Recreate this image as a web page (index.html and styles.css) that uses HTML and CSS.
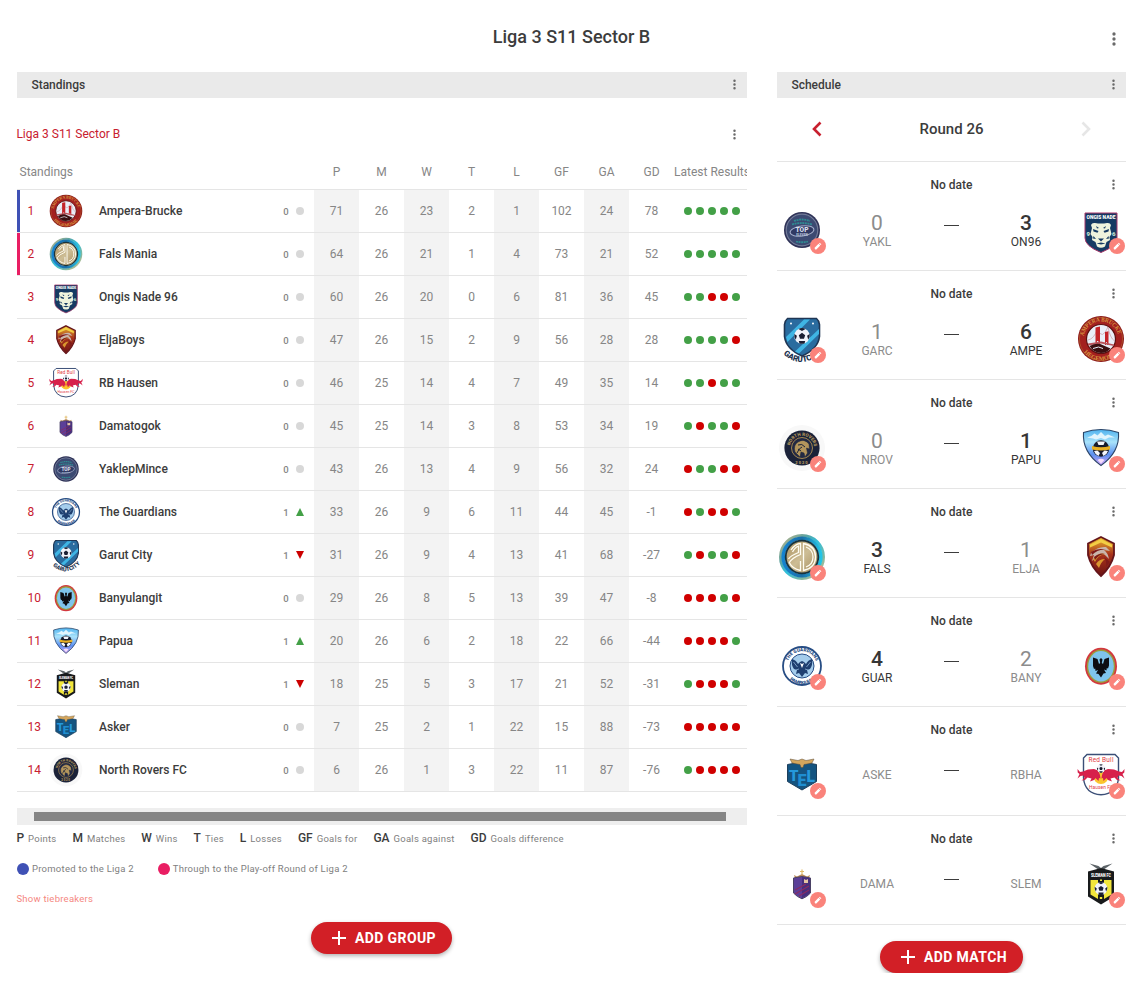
FILE: index.html
```html
<!DOCTYPE html>
<html lang="en">

<head>
    <meta charset="UTF-8">
    <meta name="viewport" content="width=device-width, initial-scale=1.0">
    <title>Liga 3 S11 Sector B</title>
    <link rel="stylesheet" href="styles.css">
</head>

<body>
    <!-- Gradients and text arcs used by the crests -->
    <svg class="defs" width="0" height="0">
        <defs>
            <linearGradient id="falsOuter" x1="0" y1="0" x2="1" y2="1">
                <stop offset="0" stop-color="#c9b98a" />
                <stop offset=".3" stop-color="#5fa3a0" />
                <stop offset=".5" stop-color="#2fc0dd" />
                <stop offset=".75" stop-color="#7fb7a0" />
                <stop offset="1" stop-color="#d8c391" />
            </linearGradient>
            <linearGradient id="falsInner" x1="0" y1="0" x2="1" y2="0">
                <stop offset="0" stop-color="#1583cf" />
                <stop offset=".5" stop-color="#1b6fa8" />
                <stop offset="1" stop-color="#22c4e6" />
            </linearGradient>
            <linearGradient id="goldFill" x1="0" y1="0" x2="1" y2="1">
                <stop offset="0" stop-color="#a98f5c" />
                <stop offset=".5" stop-color="#cdbd95" />
                <stop offset="1" stop-color="#a48b5a" />
            </linearGradient>
            <linearGradient id="eljaFill" x1="0" y1="0" x2="0" y2="1">
                <stop offset="0" stop-color="#e9b92f" />
                <stop offset=".45" stop-color="#a8321b" />
                <stop offset="1" stop-color="#6d1414" />
            </linearGradient>
            <linearGradient id="papuaFill" x1="0" y1="0" x2="0" y2="1">
                <stop offset="0" stop-color="#4fb2ee" />
                <stop offset=".35" stop-color="#a9e3fb" />
                <stop offset=".7" stop-color="#5b8ff0" />
                <stop offset="1" stop-color="#d9a5f5" />
            </linearGradient>
            <path id="arcTop" d="M6.500 24a17.500 17.500 0 0 1 35 0" />
            <path id="arcBottom" d="M2.500 24a21.500 21.500 0 0 0 43 0" />
            <path id="arcTopIn" d="M9.300 24a14.700 14.700 0 0 1 29.400 0" />
            <path id="arcBottomIn" d="M5.800 24a18.200 18.200 0 0 0 36.400 0" />
            <path id="arcGarut" d="M4.500 38.500Q24 56 43 37.500" />
            <path id="arcRovers" d="M11.800 24a12.200 12.200 0 0 1 24.400 0" />
        </defs>
    </svg>

    <!-- Icons and club crests -->
    <svg class="sprite">
        <symbol id="more" viewBox="0 0 24 24">
            <path d="M12 8a2 2 0 1 0 0-4 2 2 0 0 0 0 4zm0 2a2 2 0 1 0 0 4 2 2 0 0 0 0-4zm0 6a2 2 0 1 0 0 4 2 2 0 0 0 0-4z" />
        </symbol>
        <symbol id="pen" viewBox="0 0 24 24">
            <path d="M3 16.500V21h4.500L18 10.500 13.500 6zM21 7.500L16.500 3l-2 2L19 9.500z" />
        </symbol>
        <symbol id="ball" viewBox="0 0 24 24">
            <circle cx="12" cy="12" r="11" fill="#f1f3fa" />
            <path d="M12 7.500l4.500 3.300-1.700 5.200H9.200l-1.700-5.200zM7 2.200Q12-.5 17 2.200l-5 2.600zM22.800 9l-3.600 2.800 1.600 5.500q2.800-4 2-8.300zM1.200 9l3.600 2.800-1.600 5.500Q.4 13.300 1.200 9zM7.500 19h9l-.9 3.500q-3.600 1-7.200 0z" fill="#1b1f33" />
        </symbol>

        <symbol id="ampe" viewBox="0 0 48 48">
            <circle cx="24" cy="24" r="23" fill="#8c1717" />
            <circle cx="24" cy="24" r="21.600" fill="#a3201f" stroke="#c9963f" stroke-width=".4" />
            <circle cx="24" cy="24" r="14.500" fill="#e9eff8" stroke="#5e1010" stroke-width="1.200" />
            <path d="M11 25Q17 24 20.500 14 25 26 31 12 33 23 37.500 26" fill="none" stroke="#c98c94" stroke-width=".6" />
            <path d="M18.500 12.500l4.500-1V29h-1.600v-3h-1.500v4h-1.400zM28 17l3.500-.8V30H30v-3h-1v3h-1z" fill="#c42429" />
            <path d="M11 28.500l13-2 13 3v1.500l-13-2.500-13 2z" fill="#b8545a" />
            <path d="M12.500 31q8-4 13-1l8 3.500q-4 4.500-9.500 4.500-7.500 0-11.500-7z" fill="#3a0f10" />
            <path d="M16 33.500q6-3 10 0" fill="none" stroke="#e9eff8" stroke-width="1" />
            <g fill="#d9993f" font-family="Liberation Serif, serif" font-weight="700" font-size="6">
                <text textLength="47" lengthAdjust="spacingAndGlyphs"><textPath href="#arcTop" startOffset="3">AMPERA BRUCKE</textPath></text>
                <text><textPath href="#arcBottom" startOffset="14">HEGEMONIE</textPath></text>
            </g>
        </symbol>

        <symbol id="fals" viewBox="0 0 48 48">
            <circle cx="24" cy="24" r="21.500" fill="none" stroke="url(#falsOuter)" stroke-width="3" />
            <circle cx="24" cy="24" r="18.800" fill="none" stroke="url(#falsInner)" stroke-width="3.600" />
            <circle cx="24" cy="24" r="16.300" fill="url(#goldFill)" stroke="#17333f" stroke-width="1.800" />
            <g fill="none" stroke="#fffdf3" stroke-width="1.300">
                <path d="M13 17q4-6 9.500-6.500v11Q14 25 11.300 29.500q2.700 6 11.200 8V28" />
                <path d="M14.500 19q3-5 6-5.800v6.300Q12 23 10.500 26" />
                <path d="M25.500 10.500q12 2.500 12 13.500t-12 13.500z" />
                <path d="M28 14q7 2.500 7 10t-7 10" />
            </g>
        </symbol>

        <symbol id="on96" viewBox="0 0 48 48">
            <path d="M8 7h32v25q0 8-16 14.500Q8 40 8 32z" fill="#153a63" stroke="#a6386a" stroke-width="1" />
            <text x="24" y="13.200" font-size="5.400" text-anchor="middle" textLength="29" lengthAdjust="spacingAndGlyphs" class="crest-text" fill="#fff">ONGIS NADE</text>
            <path d="M14 19q1-2.500 4-2l3 .5h6l3-.5q3-.5 4 2l-1 3 1.500 6-2 3 .5 3-3.500 2-1.500 4.500q-4 2.500-8 0L18.500 36 15 34l.5-3-2-3 1.500-6z" fill="#eef3dd" />
            <path d="M16 23l5.500 2-1 1.800-4-1.300zM32 23l-5.500 2 1 1.800 4-1.300zM21 32.500h6L24 35.500zM19.500 37.500l4.500-1 4.500 1-4.500 1zM16.500 30l2.500 3-3-.5zM31.500 30L29 33l3-.5zM19 20l3 2-2 .5zM29 20l-3 2 2 .5z" fill="#153a63" />
            <text x="9.500" y="30" font-size="6" class="crest-text" fill="#c5e4d4">9</text>
            <text x="35" y="30" font-size="6" class="crest-text" fill="#c5e4d4">6</text>
        </symbol>

        <symbol id="elja" viewBox="0 0 48 48">
            <path d="M24 4l13 6.500V22Q34 34 24 43 14 34 11 22V10.500z" fill="url(#eljaFill)" stroke="#64141a" stroke-width="1.800" />
            <path d="M24 6l11 5.500v3L24 9.500l-11 5v-3z" fill="#f3cf45" />
            <path d="M14 20q7-7 15-6l4 4-6-1q4 3 5 9l-4-4q-3-2-6 0l-7 6 2-6-4 1z" fill="#c9b5ab" />
            <path d="M16 26q6-7 12-5-7 1-10 8zM19 31q3-5 9-5-4 3-6 9z" fill="#d9962f" />
            <path d="M14 19q8-5 15-2-8-1-14 5zM27 24l6 5-4 5q1-5-2-10zM17 24q6-5 11-3-6 0-10 6z" fill="#7f1b1a" />
        </symbol>

        <symbol id="rbha" viewBox="0 0 48 48">
            <path d="M10 3.500h28l3.500 3.500v20Q40 43 24 43.800 8 43 6.500 27V7z" fill="#fff" stroke="#3b4f77" stroke-width="1.400" />
            <circle cx="24" cy="25.500" r="7.600" fill="#fbc52d" />
            <path d="M23 24l-2-4.500-4-1.500-6 .5-5 2-3 .5-2.500-3 .2 3.500 1.800 1.500L.5 27.500l3-2.500 3-.5 1 2.500-3 2.500 3.500-.5 2.500-2.500 4 1-1.500 3 4-1.500 1.500-2 3 3 .5-3 1.500.5z" fill="#d7204b" />
            <path d="M25 24l2-4.500 4-1.500 6 .5 5 2 3 .5 2.500-3-.2 3.500-1.800 1.500 2 4.500-3-2.500-3-.5-1 2.500 3 2.500-3.500-.5-2.500-2.500-4 1 1.500 3-4-1.500-1.500-2-3 3-.5-3-1.500.5z" fill="#d7204b" />
            <use href="#ball" x="19.500" y="13" width="9" height="9" />
            <text x="24" y="10.800" font-size="6.500" text-anchor="middle" textLength="25" class="crest-plain" fill="#df3a43">Red Bull</text>
            <text x="24" y="38" font-size="4.800" text-anchor="middle" textLength="24" class="crest-plain" fill="#df3a43">Hausen FC</text>
        </symbol>

        <symbol id="dama" viewBox="0 0 48 48">
            <path d="M17 18l-1-3 3 1.500L24 14l5 2.500 3-1.500-1 3z" fill="#b98958" />
            <path d="M24 9.500v5M22 11.500h4" stroke="#e2bb68" stroke-width="1.200" />
            <path d="M15.500 18l8.500-1.500 8.500 1.500v15Q29 37 24 38.800 19 37 15.500 33z" fill="#5b3f98" stroke="#4a4165" stroke-width="1" />
            <path d="M24 17l8 1.300v14.500Q29 36 24 38z" fill="#472f7c" />
            <path d="M17 30l11-6M17 34l14-8M21 36l10-6" stroke="#8a2b62" stroke-width="1.100" />
            <path d="M26 19l2 1 2-1v4h-4z" fill="#e4c5a4" />
        </symbol>

        <symbol id="yakl" viewBox="0 0 48 48">
            <circle cx="24" cy="24" r="18" fill="#2e3257" />
            <circle cx="24" cy="24" r="15.800" fill="#3c4a72" stroke="#727b98" stroke-width="1.200" />
            <path d="M16 15q8-3 16 0M14 18.500q10-3 20 0M18 35.500q6 1.500 12 0" stroke="#2f8a92" stroke-width="1.800" fill="none" stroke-dasharray="2 .6" />
            <ellipse cx="24" cy="25" rx="12" ry="5" fill="#303a63" stroke="#a4aecb" stroke-width="1" transform="rotate(-8 24 25)" />
            <text x="24" y="26.300" font-size="6.500" text-anchor="middle" textLength="13" lengthAdjust="spacingAndGlyphs" class="crest-text" fill="#d8dfec">TOP</text>
            <text x="24" y="29.700" font-size="3.200" text-anchor="middle" class="crest-text" fill="#b4c0d8">ELEVEN</text>
        </symbol>

        <symbol id="guar" viewBox="0 0 48 48">
            <circle cx="24" cy="24" r="19" fill="#fff" stroke="#274d84" stroke-width="1.800" />
            <circle cx="24" cy="24" r="12" fill="#a5cdec" stroke="#274d84" stroke-width="1" />
            <path d="M14 17q4 1 6 5l2-2 2-1 2 1 2 2q2-4 6-5 1 6-2 10l-3 1 1 4-3-1-3 4-3-4-3 1 1-4-3-1q-3-4-2-10z" fill="#1f3f70" />
            <path d="M22 21l2 1 2-1-2 5z" fill="#fff" />
            <path d="M15.500 20l4 5M32.500 20l-4 5M18 28l3-1M30 28l-3-1" stroke="#8fb4d8" stroke-width=".8" />
            <g class="crest-text" fill="#274d84" font-size="4.600">
                <text><textPath href="#arcTopIn" startOffset="5">THE GUARDIANS</textPath></text>
                <text><textPath href="#arcBottomIn" startOffset="15">PAMEKASAN</textPath></text>
            </g>
        </symbol>

        <symbol id="garc" viewBox="0 0 48 48">
            <path d="M9.500 3.500h29q2.500 2 3 6v12Q40 34 24 41 8 34 6.500 21.500v-12q.5-4 3-6z" fill="#2a6c9f" stroke="#1f3654" stroke-width="1.600" />
            <path d="M8 22L26 4.500h6L9.500 27zM17 36.500L41 14v5L21 38.500z" fill="#3fb5e4" />
            <use href="#ball" x="15.500" y="12.500" width="17" height="17" />
            <circle cx="13" cy="8.500" r="1" fill="#fff" />
            <circle cx="35" cy="8.500" r="1" fill="#fff" />
            <text font-size="8" class="crest-text" fill="#1d3450"><textPath href="#arcGarut" startOffset="1">GARUTCITY</textPath></text>
        </symbol>

        <symbol id="bany" viewBox="0 0 48 48">
            <ellipse cx="24" cy="24.200" rx="16" ry="18.500" fill="#d3383e" />
            <ellipse cx="24" cy="24.200" rx="14.200" ry="16.700" fill="#9a9b3c" />
            <ellipse cx="24" cy="24.200" rx="12.800" ry="15.200" fill="#7fc4ec" />
            <path d="M16 15.500l4.500 1.500 1.500 5 1.200-1-.7-3.500L24 16l1.500 1.500-.7 3.500 1.200 1 1.500-5 4.500-1.500 0 8-1 3-1.200-.5-.3 2.500-2.500-1 2 3.500-2.500.5L24 35.500 21.500 32l-2.500-.5 2-3.500-2.500 1-.3-2.500-1.200.5-1-3z" fill="#0d0d12" />
        </symbol>

        <symbol id="papu" viewBox="0 0 48 48">
            <path d="M6.500 8.500Q24 2.500 41.500 8.500 43 28 24 41.500 5 28 6.500 8.500z" fill="url(#papuaFill)" stroke="#2b4568" stroke-width="1.100" />
            <path d="M10 13.500q5-1 7.500-4l3 2L24 8l4 4 3-1.500 7 3-6 0-4 2-4-1.500-5 1.500-3-1z" fill="#e2f5fd" />
            <circle cx="24" cy="24.500" r="8.200" fill="#171b2c" />
            <path d="M20 17.500h8l-1.500 3.500h-5zM17 27l3.500-.5 2.500 2.500-1.500 3q-3.500-1.500-4.500-5zM31 27l-3.500-.5-2.500 2.500 1.500 3q3.500-1.500 4.500-5z" fill="#f4f6fc" />
            <path d="M15 22q9 2.500 18 0v3.500q-9 2-18 0z" fill="#e8b024" />
            <path d="M20.500 36q3.500-2.500 7 0L24 39.500z" fill="#f4dcfb" />
        </symbol>

        <symbol id="slem" viewBox="0 0 48 48">
            <path d="M12.500 3.500l9 2.500 5 4-6-1zM35.500 3.500l-9 2.500-5 4 6-1z" fill="#5d6468" />
            <path d="M24 8l13 3.500v25L24 44.500l-13-8v-25z" fill="#181a1c" />
            <path d="M13.500 20h21v14.500l-7.500 4.500h-6l-7.500-4.500z" fill="#f2e63b" />
            <path d="M21 20h6v19h-6z" fill="#181a1c" />
            <use href="#ball" x="17" y="21.500" width="14" height="14" />
            <path d="M22.800 37h2.400v2h-2.400zM23 19.500h2v1.500h-2z" fill="#f2e63b" />
            <text x="24" y="17" font-size="5.600" text-anchor="middle" textLength="20" lengthAdjust="spacingAndGlyphs" class="crest-text" fill="#fff">SLEMAN FC</text>
        </symbol>

        <symbol id="aske" viewBox="0 0 48 48">
            <path d="M9.500 13.500L24 11l14.500 2.500v17L24 39 9.500 30.500z" fill="#145480" stroke="#1d3f5c" stroke-width="1" />
            <text x="11" y="29.500" font-size="15" textLength="9.500" lengthAdjust="spacingAndGlyphs" class="crest-text" fill="#2599dc">T</text>
            <text x="19.500" y="34.500" font-size="16" textLength="9" lengthAdjust="spacingAndGlyphs" class="crest-text" fill="#1f8ed0">E</text>
            <text x="28.500" y="31" font-size="16" textLength="8.500" lengthAdjust="spacingAndGlyphs" class="crest-text" fill="#2599dc">L</text>
            <path d="M12 8l8 1.500 4-1.500 4 1.500L36 8l-2 4-5 1-3 .5-1 3h-2l-1-3-3-.5-5-1z" fill="#d4a65d" stroke="#5a4a36" stroke-width=".5" />
        </symbol>

        <symbol id="nrov" viewBox="0 0 48 48">
            <circle cx="24" cy="24" r="23" fill="#f8f8f8" />
            <circle cx="24" cy="24" r="17.600" fill="#1b2238" />
            <circle cx="24" cy="24" r="10.500" fill="#222944" stroke="#a1844f" stroke-width="1" />
            <path d="M17 28q-2-7 3-10 6-4 11 2l.5 5-3-1 1 5-2.500 4-1-4-3-1-1 5z" fill="#b3955c" stroke="#1b2238" stroke-width=".5" />
            <path d="M20 21q4-2 7 2M20 25l3 2M19 29q2-5 5-6" stroke="#1b2238" stroke-width="1" fill="none" />
            <g class="crest-text" fill="#b0925a" font-size="4.600">
                <text><textPath href="#arcRovers" startOffset="2.500">NORTH ROVERS</textPath></text>
                <text x="24" y="39.500" text-anchor="middle" font-size="4" letter-spacing="1">2020</text>
            </g>
        </symbol>
    </svg>

    <header class="page-header">
        <h1>Liga 3 S11 Sector B</h1>
        <svg class="more more-lg"><use href="#more" /></svg>
    </header>

    <main class="columns">
        <section class="standings">
            <div class="bar">
                <h2>Standings</h2>
                <svg class="more"><use href="#more" /></svg>
            </div>
            <div class="group-head">
                <a class="group-name">Liga 3 S11 Sector B</a>
                <svg class="more"><use href="#more" /></svg>
            </div>

            <div class="table-wrap">
                <div class="row head">
                    <span class="head-title">Standings</span>
                    <span>P</span>
                    <span>M</span>
                    <span>W</span>
                    <span>T</span>
                    <span>L</span>
                    <span>GF</span>
                    <span>GA</span>
                    <span>GD</span>
                    <span class="head-latest">Latest Results</span>
                </div>
                <div id="table"></div>
            </div>
            <div class="scrollbar">
                <div class="thumb"></div>
            </div>

            <div class="legend">
                <span><b>P</b>Points</span>
                <span><b>M</b>Matches</span>
                <span><b>W</b>Wins</span>
                <span><b>T</b>Ties</span>
                <span><b>L</b>Losses</span>
                <span><b>GF</b>Goals for</span>
                <span><b>GA</b>Goals against</span>
                <span><b>GD</b>Goals difference</span>
            </div>
            <div class="zones">
                <span><i class="zone promoted"></i>Promoted to the Liga 2</span>
                <span><i class="zone playoff"></i>Through to the Play-off Round of Liga 2</span>
            </div>
            <a class="tiebreakers">Show tiebreakers</a>

            <button class="add add-group">
                <svg viewBox="0 0 14 14"><path d="M7 0v14M0 7h14" /></svg>ADD GROUP
            </button>
        </section>

        <section class="schedule">
            <div class="bar">
                <h2>Schedule</h2>
                <svg class="more"><use href="#more" /></svg>
            </div>
            <div class="round">
                <svg class="arrow" viewBox="0 0 10 16"><path d="M8.500 1.500L2 8l6.500 6.500" /></svg>
                <h3>Round 26</h3>
                <svg class="arrow off" viewBox="0 0 10 16"><path d="M1.500 1.500L8 8l-6.500 6.500" /></svg>
            </div>
            <div id="matches"></div>
            <button class="add add-match">
                <svg viewBox="0 0 14 14"><path d="M7 0v14M0 7h14" /></svg>ADD MATCH
            </button>
        </section>
    </main>

    <script src="script.js"></script>
</body>

</html>
```
FILE: styles.css
```css
* {
    box-sizing: border-box;
}

body {
    margin: 0;
    padding: 0 22px 0 17px;
    background: #fff;
    color: #3c3c3c;
    font-family: Roboto, sans-serif;
    font-size: 12px;
}

h1,
h2,
h3 {
    margin: 0;
    font-weight: 500;
}

.defs {
    position: absolute;
}

.sprite {
    display: none;
}

.crest-text {
    font-family: Roboto, sans-serif;
    font-weight: 900;
}

.crest-plain {
    font-family: Roboto, sans-serif;
}

/* Header */
.page-header {
    display: grid;
    grid-template-columns: 24px 1fr 24px;
    align-items: center;
    height: 72px;
    padding-top: 2px;
}

.page-header h1 {
    grid-column: 2;
    text-align: center;
    font-size: 18px;
    line-height: 24px;
}

.more {
    width: 15px;
    height: 15px;
    fill: #6a6a6a;
}

.more-lg {
    width: 20px;
    height: 20px;
    margin: 4px 0 0 2px;
}

.columns {
    display: grid;
    grid-template-columns: 730px 349px;
    column-gap: 30px;
}

.bar {
    display: flex;
    align-items: center;
    justify-content: space-between;
    height: 26px;
    padding: 0 5px 1px 14.4px;
    background: #eaeaea;
}

.bar h2 {
    font-size: 12px;
    padding-top: 1px;
}

/* Standings */
.group-head {
    display: flex;
    align-items: center;
    justify-content: space-between;
    height: 72px;
    padding-right: 5px;
}

.group-name {
    margin-left: -.6px;
    color: #c8202f;
}

.table-wrap {
    overflow: hidden;
    margin-top: -16px;
}

.row {
    display: grid;
    grid-template-columns: 3px 30px 32px 17px 180px 14px 21px repeat(8, 45px) 78px;
    align-items: center;
    height: 43px;
    border-bottom: 1px solid #e5e5e5;
    color: #868686;
    width: 736px;
    text-align: center;
}

.row.head {
    height: 36px;
}

.head-title {
    grid-column: 1 / 8;
    text-align: left;
    padding-left: 2.5px;
}

.head-latest {
    white-space: nowrap;
    text-align: left;
}

.mark {
    align-self: stretch;
}

.promoted {
    background: #3f51b5;
}

.playoff {
    background: #e91e63;
}

.rank {
    color: #c8202f;
    text-align: left;
    padding-left: 7.5px;
}

.row .crest {
    width: 34px;
    height: 34px;
    margin-left: -1px;
}

.name {
    grid-column: 5;
    text-align: left;
    font-weight: 500;
    color: #3c3c3c;
}

.moved {
    font-size: 9.5px;
    font-weight: 500;
    padding-top: 1px;
}

.move {
    width: 8px;
    height: 8px;
    margin-left: 3px;
    background: #d8d8d8;
    border-radius: 50%;
}

.move.up,
.move.down {
    border-radius: 0;
    background: #43a047;
    clip-path: polygon(50% 0, 100% 100%, 0 100%);
}

.move.down {
    background: #c00;
    clip-path: polygon(0 0, 100% 0, 50% 100%);
}

.stat {
    height: 42px;
    line-height: 42px;
}

.shade {
    background: #f3f3f3;
}

.form {
    display: flex;
    gap: 4px;
    padding-left: 10px;
}

.form i {
    width: 8px;
    height: 8px;
    border-radius: 50%;
    background: #43a047;
}

.form .lost {
    background: #d00000;
}

.scrollbar {
    height: 17px;
    margin-top: 16px;
    padding: 4px 21px 4px 17px;
    background: #eee;
}

.thumb {
    height: 9px;
    background: #858585;
}

/* Legend */
.legend,
.zones {
    display: flex;
    font-size: 9.5px;
    letter-spacing: .25px;
    color: #808080;
    white-space: nowrap;
}

.legend {
    gap: 15.9px;
    height: 25px;
    margin-left: -.6px;
    align-items: center;
}

.legend b {
    margin-right: 4px;
    font-size: 12px;
    font-weight: 500;
    letter-spacing: 0;
    color: #3c3c3c;
}

.zones {
    gap: 24px;
    height: 37px;
    align-items: center;
}

.zones span {
    display: flex;
    align-items: center;
    gap: 3px;
}

.zone {
    width: 12px;
    height: 12px;
    border-radius: 50%;
}

.tiebreakers {
    display: block;
    height: 35px;
    margin-left: -.6px;
    line-height: 23px;
    font-size: 9.5px;
    letter-spacing: .25px;
    color: #f5877f;
}

.add {
    display: flex;
    align-items: center;
    justify-content: center;
    gap: 9px;
    height: 32px;
    margin: 0 auto;
    padding: 0 0 0 5px;
    border: 0;
    border-radius: 16px;
    background: #d21f26;
    box-shadow: 0 2px 4px rgba(0, 0, 0, .3);
    color: #fff;
    font: 700 14px/30px Roboto, sans-serif;
    letter-spacing: .4px;
}

.add svg {
    width: 14px;
    height: 14px;
    stroke: #fff;
    stroke-width: 2;
}

.add-group {
    width: 141px;
    margin-left: 294px;
}

.add-match {
    width: 143px;
    margin-top: 16px;
}

/* Schedule */
.round {
    display: flex;
    align-items: center;
    justify-content: space-between;
    height: 64px;
    padding: 0 35px 2px;
    border-bottom: 1px solid #e5e5e5;
}

.round h3 {
    font-size: 15px;
}

.arrow {
    width: 10px;
    height: 16px;
    fill: none;
    stroke: #c8202f;
    stroke-width: 2.6;
}

.arrow.off {
    stroke: #e6e6e6;
}

.match {
    height: 109px;
    border-bottom: 1px solid #e5e5e5;
}

.match-date {
    display: grid;
    grid-template-columns: 20px 1fr 20px;
    align-items: center;
    height: 44px;
    padding-top: 1px;
    text-align: center;
    font-weight: 500;
}

.match-date span {
    grid-column: 2;
    padding-top: 1px;
}

.match-row {
    display: grid;
    grid-template-columns: 50px 100px 49px 100px 50px;
    align-items: center;
    height: 48px;
    text-align: center;
}

.badge {
    position: relative;
    height: 48px;
}

.badge .crest {
    width: 48px;
    height: 48px;
}

.edit {
    position: absolute;
    right: 1px;
    bottom: 0;
    width: 16px;
    height: 16px;
    padding: 3.5px;
    border-radius: 50%;
    background: #fa837b;
    fill: #fff;
}

.side {
    color: #8c8c8c;
    line-height: 14px;
}

.side strong {
    display: block;
    font-size: 21px;
    font-weight: 400;
    line-height: 24px;
}

.side.win {
    color: #363636;
}

.side.win strong {
    font-weight: 500;
}

.dash {
    width: 15px;
    height: 1px;
    margin: -9px auto 0;
    background: #3c3c3c;
}
```
FILE: script.js
```js
// crest, name, places moved, P, M, W, T, L, GF, GA, GD, last five
const teams = [
    ['ampe', 'Ampera-Brucke', 0, 71, 26, 23, 2, 1, 102, 24, 78, 'WWWWW'],
    ['fals', 'Fals Mania', 0, 64, 26, 21, 1, 4, 73, 21, 52, 'WWWWW'],
    ['on96', 'Ongis Nade 96', 0, 60, 26, 20, 0, 6, 81, 36, 45, 'WWLLW'],
    ['elja', 'EljaBoys', 0, 47, 26, 15, 2, 9, 56, 28, 28, 'WWWWL'],
    ['rbha', 'RB Hausen', 0, 46, 25, 14, 4, 7, 49, 35, 14, 'WWLWW'],
    ['dama', 'Damatogok', 0, 45, 25, 14, 3, 8, 53, 34, 19, 'WLWWL'],
    ['yakl', 'YaklepMince', 0, 43, 26, 13, 4, 9, 56, 32, 24, 'LWWLL'],
    ['guar', 'The Guardians', 1, 33, 26, 9, 6, 11, 44, 45, -1, 'LWLLW'],
    ['garc', 'Garut City', -1, 31, 26, 9, 4, 13, 41, 68, -27, 'WLWWL'],
    ['bany', 'Banyulangit', 0, 29, 26, 8, 5, 13, 39, 47, -8, 'LLLWL'],
    ['papu', 'Papua', 1, 20, 26, 6, 2, 18, 22, 66, -44, 'LLLLW'],
    ['slem', 'Sleman', -1, 18, 25, 5, 3, 17, 21, 52, -31, 'WLLLW'],
    ['aske', 'Asker', 0, 7, 25, 2, 1, 22, 15, 88, -73, 'LLLLL'],
    ['nrov', 'North Rovers FC', 0, 6, 26, 1, 3, 22, 11, 87, -76, 'WLLLL']
];

const matches = [
    ['yakl', 0, 'on96', 3],
    ['garc', 1, 'ampe', 6],
    ['nrov', 0, 'papu', 1],
    ['fals', 3, 'elja', 1],
    ['guar', 4, 'bany', 2],
    ['aske', null, 'rbha', null],
    ['dama', null, 'slem', null]
];

const zones = ['promoted', 'playoff'];

function crest(id) {
    return `<svg class="crest"><use href="#${id}"/></svg>`;
}

function teamRow(team, i) {
    const [id, name, moved] = team;
    const stats = team.slice(3, 11);
    const form = team[11];
    const direction = moved > 0 ? 'up' : moved < 0 ? 'down' : '';

    return `<div class="row">
        <span class="mark ${zones[i] || ''}"></span>
        <span class="rank">${i + 1}</span>
        ${crest(id)}
        <span class="name">${name}</span>
        <span class="moved">${Math.abs(moved)}</span>
        <span class="move ${direction}"></span>
        ${stats.map((s, n) => `<span class="stat ${n % 2 ? '' : 'shade'}">${s}</span>`).join('')}
        <span class="form">${[...form].map(r => `<i class="${r === 'L' ? 'lost' : ''}"></i>`).join('')}</span>
    </div>`;
}

function badge(id) {
    return `<div class="badge">${crest(id)}<svg class="edit"><use href="#pen"/></svg></div>`;
}

function side(id, score, other) {
    const number = score === null ? '' : `<strong>${score}</strong>`;
    return `<div class="side ${score > other ? 'win' : ''}">${number}${id.toUpperCase()}</div>`;
}

function matchRow([home, homeScore, away, awayScore]) {
    return `<div class="match">
        <div class="match-date"><span>No date</span><svg class="more"><use href="#more"/></svg></div>
        <div class="match-row">
            ${badge(home)}
            ${side(home, homeScore, awayScore)}
            <div class="dash"></div>
            ${side(away, awayScore, homeScore)}
            ${badge(away)}
        </div>
    </div>`;
}

document.getElementById('table').innerHTML = teams.map(teamRow).join('');
document.getElementById('matches').innerHTML = matches.map(matchRow).join('');
```
